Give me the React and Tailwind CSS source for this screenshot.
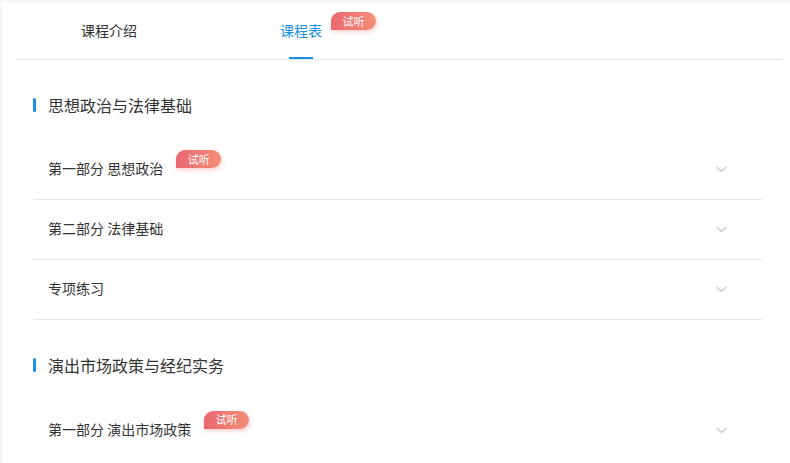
import React from "react";

const sections = [
  {
    title: "思想政治与法律基础",
    rows: [
      { name: "第一部分 思想政治", trial: true },
      { name: "第二部分 法律基础" },
      { name: "专项练习" },
    ],
  },
  {
    title: "演出市场政策与经纪实务",
    rows: [{ name: "第一部分 演出市场政策", trial: true, last: true }],
  },
];

function TrialBadge({ className = "" }) {
  return (
    <span
      className={
        "absolute left-full flex h-[18px] w-[45px] items-center justify-center rounded-tl-full rounded-tr-full rounded-br-full bg-gradient-to-r from-[#ea6870] to-[#f48d78] text-[11px] leading-none text-white shadow-[1px_2px_4px_rgba(240,120,110,0.35)] " +
        className
      }
    >
      试听
    </span>
  );
}

function Chevron() {
  return (
    <svg width="11" height="7" viewBox="0 0 11 7" fill="none">
      <path
        d="M1 1.2 L5.5 5.5 L10 1.2"
        stroke="#c6c8cc"
        strokeWidth="1.2"
        strokeLinecap="round"
        strokeLinejoin="round"
      />
    </svg>
  );
}

export default function App() {
  return (
    <div
      className="h-[463px] overflow-hidden bg-[#f5f5f7] pl-[2px] pt-[2px]"
      style={{ fontFamily: '"Noto Sans CJK SC", "Noto Sans", sans-serif' }}
    >
      <div className="h-full bg-white">
        {/* Tabs */}
        <div className="mx-[15px] h-[58px] w-[765px] border-b border-[#e4e6ea]">
          <div className="-ml-[4px] flex h-full">
            <div className="flex w-[192px] items-center justify-center">
              <span className="text-[14px] text-[#333]">课程介绍</span>
            </div>
            <div className="relative flex w-[192px] items-center justify-center">
              <span className="relative text-[14px] text-[#1a8fe3]">
                课程表
                <TrialBadge className="-top-[8px] ml-[9px]" />
              </span>
              <span className="absolute bottom-0 left-1/2 h-[2px] w-[24px] -translate-x-1/2 bg-[#1a8fe3]" />
            </div>
          </div>
        </div>

        {/* Sections */}
        <div className="pl-[31px] pr-[28px]">
          {sections.map((s) => (
            <div key={s.title} className="pt-[30px]">
              <div className="flex h-[30px] items-center">
                <span className="h-[14px] w-[3px] rounded-sm bg-[#1a8fe3]" />
                <span className="ml-[12px] text-[16px] text-[#333]">{s.title}</span>
              </div>
              <div className="mt-[20px]">
                {s.rows.map((r) => (
                  <div
                    key={r.name}
                    className={
                      "flex h-[60px] items-center justify-between pl-[15px] pr-[35px] " +
                      (r.last ? "" : "border-b border-[#e4e6ea]")
                    }
                  >
                    <span className="relative top-[-1px] text-[14px] text-[#333]">
                      {r.name}
                      {r.trial && <TrialBadge className="-top-[8px] ml-[13px]" />}
                    </span>
                    <Chevron />
                  </div>
                ))}
              </div>
            </div>
          ))}
        </div>
      </div>
    </div>
  );
}
